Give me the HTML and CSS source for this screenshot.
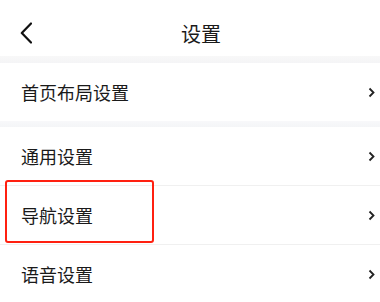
FILE: index.html
```html
<!DOCTYPE html>
<html lang="zh">
<head>
<meta charset="utf-8">
<link rel="stylesheet" href="styles.css">
</head>
<body>
<div class="page">
  <header class="topbar">
    <svg class="back" width="12" height="22" viewBox="0 0 12 22"><path d="M11 1.5 L1.8 11 L11 20.5" fill="none" stroke="#111" stroke-width="2.2" stroke-linecap="round" stroke-linejoin="round"/></svg>
    <div class="title">设置</div>
  </header>
  <div class="band band-top"></div>
  <div class="group">
    <div class="row"><span class="label">首页布局设置</span><svg class="chev" width="7" height="11" viewBox="0 0 7 11"><path d="M1.5 1.5 L5.5 5.5 L1.5 9.5" fill="none" stroke="#222" stroke-width="1.8"/></svg></div>
  </div>
  <div class="band"></div>
  <div class="group">
    <div class="row"><span class="label">通用设置</span><svg class="chev" width="7" height="11" viewBox="0 0 7 11"><path d="M1.5 1.5 L5.5 5.5 L1.5 9.5" fill="none" stroke="#222" stroke-width="1.8"/></svg></div>
    <div class="row sep"><span class="label">导航设置</span><svg class="chev" width="7" height="11" viewBox="0 0 7 11"><path d="M1.5 1.5 L5.5 5.5 L1.5 9.5" fill="none" stroke="#222" stroke-width="1.8"/></svg><div class="mark"></div></div>
    <div class="row sep"><span class="label">语音设置</span><svg class="chev" width="7" height="11" viewBox="0 0 7 11"><path d="M1.5 1.5 L5.5 5.5 L1.5 9.5" fill="none" stroke="#222" stroke-width="1.8"/></svg></div>
  </div>
</div>
</body>
</html>
```
FILE: styles.css
```css
html, body {
  margin: 0;
  padding: 0;
  background: #fff;
}
body {
  font-family: "Noto Sans CJK SC", "Noto Sans", sans-serif;
  color: #1a1a1a;
  width: 380px;
  height: 302px;
  overflow: hidden;
}
.topbar {
  height: 56px;
  display: flex;
  align-items: center;
  justify-content: center;
  position: relative;
  background: #fff;
}
.back {
  position: absolute;
  left: 20px;
  top: 22px;
}
.title {
  font-size: 20px;
  line-height: 20px;
  margin-left: 22px;
  margin-top: 12px;
  color: #1a1a1a;
}
.band {
  height: 6px;
  background: linear-gradient(#f8f8fa, #f4f5f7);
}
.band-top {
  height: 7px;
  background: linear-gradient(#f8f8f8, #f4f4f6);
}
.row {
  height: 58px;
  display: flex;
  align-items: center;
  justify-content: space-between;
  padding: 0 5px 0 21px;
  position: relative;
}
.row.sep {
  border-top: 1px solid #f0f0f0;
}
.label {
  font-size: 18px;
  line-height: 18px;
  color: #1a1a1a;
}
.chev {
  display: block;
}
.mark {
  position: absolute;
  left: 5px;
  top: -6px;
  width: 145px;
  height: 59px;
  border: 2.5px solid #ff2010;
  border-radius: 3px;
}
```
